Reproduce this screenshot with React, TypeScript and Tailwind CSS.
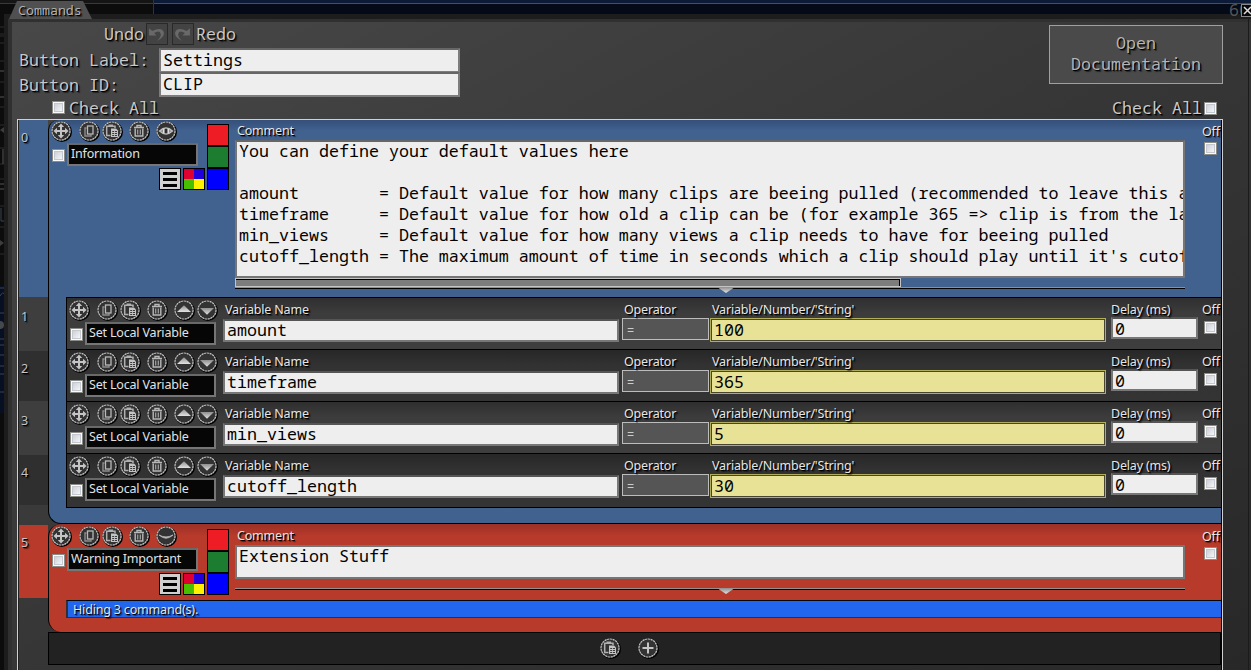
import React from "react";

const MONO_FACE = "font-['Noto_Sans_Mono','DejaVu_Sans_Mono',monospace] text-[16.67px] whitespace-pre";
const MONO = `${MONO_FACE} leading-[21px]`;
const SANS = "font-['Noto_Sans',sans-serif] text-[12.5px] tracking-[-0.18px] leading-[16px] whitespace-nowrap";
const SHADOW = "[text-shadow:1px_1px_0_#000,2px_2px_1px_#0008]";

type IconName = "move" | "copy" | "paste" | "trash" | "eye" | "closed" | "up" | "down" | "plus";

const glyphs: Record<IconName, React.ReactNode> = {
  move: (
    <>
      <path d="M10 4v12M4 10h12" stroke="#c4c4c4" strokeWidth="2" />
      <path d="M10 2.5l3.2 3.5H6.8zM10 17.5l3.2-3.5H6.8zM2.5 10L6 6.8v6.4zM17.5 10L14 6.8v6.4z" fill="#c4c4c4" />
    </>
  ),
  copy: (
    <>
      <path d="M7.5 7H6v8h6v-1.5" fill="none" stroke="#8d8d8d" strokeWidth="1.4" />
      <rect x="8.5" y="5" width="5.5" height="8" fill="#333" stroke="#b8b8b8" strokeWidth="1.3" />
    </>
  ),
  paste: (
    <>
      <path d="M8.5 14.5H4.7V5.2H13V7" fill="none" stroke="#b0b0b0" strokeWidth="1.5" />
      <path d="M6.5 3.5h4.6V6H6.5z" fill="#b0b0b0" />
      <path d="M9 7.5h5l2 2V16H9z" fill="#c4c4c4" />
      <path d="M10.2 10.5h2M13 10.5h2M10.2 12.5h2M13 12.5h2M10.2 14.5h2M13 14.5h2" stroke="#3a3a3a" />
    </>
  ),
  trash: (
    <>
      <path d="M5 6.5h10M8 6V4.5h4V6" fill="none" stroke="#b8b8b8" strokeWidth="1.4" />
      <path d="M6.2 7.5V15h7.6V7.5" fill="none" stroke="#b8b8b8" strokeWidth="1.4" />
      <path d="M8.7 8.5v5M11.3 8.5v5" stroke="#a5a5a5" strokeWidth="1.2" />
    </>
  ),
  eye: (
    <>
      <path d="M3.5 10Q10 4 16.5 10Q10 16 3.5 10z" fill="#8f8f8f" stroke="#c0c0c0" strokeWidth="1.2" />
      <path d="M10 7.8v4.4" stroke="#222" strokeWidth="1.8" />
      <path d="M7.5 7.8v4.4M12.5 7.8v4.4" stroke="#ddd" strokeWidth="1" />
    </>
  ),
  closed: <path d="M3 9Q10 15.5 17 9Q10 12.8 3 9z" fill="#bbb" stroke="#bbb" strokeWidth=".8" />,
  up: <path d="M3 12L10 5.2L17 12z" fill="url(#arrowFill)" />,
  down: <path d="M3 8L10 14.8L17 8z" fill="url(#arrowFill)" />,
  plus: <path d="M10 4.5v11M4.5 10h11" stroke="#c4c4c4" strokeWidth="2" />,
};

function Icon({ name, className = "" }: { name: IconName; className?: string }) {
  return (
    <svg viewBox="0 0 21 21" className={`size-[21px] shrink-0 ${className}`}>
      <defs>
        <linearGradient id="arrowFill" x1="0" y1="0" x2="0" y2="1">
          <stop offset="0" stopColor="#8e8e8e" />
          <stop offset="1" stopColor="#e2e2e2" />
        </linearGradient>
      </defs>
      <circle cx="10.9" cy="10.9" r="9.3" fill="none" stroke="#000" strokeWidth="1.6" />
      <circle cx="10" cy="10" r="9" fill="#333" stroke="#1b1b1b" strokeWidth="1.5" />
      <circle cx="10" cy="10" r="9" fill="none" stroke="#c8c8c8" strokeWidth="1.2" strokeDasharray="2.3 .5" />
      {glyphs[name]}
    </svg>
  );
}

function IconBar({ names }: { names: IconName[] }) {
  return (
    <div className="flex h-[21px]">
      {names.map((n, i) => (
        <Icon
          key={n}
          name={n}
          className={i === 0 ? "" : i === 1 ? "ml-[7px]" : i === 2 ? "ml-[2px]" : i === 5 ? "ml-[2px]" : "ml-[6px]"}
        />
      ))}
    </div>
  );
}

function Check({ className = "" }: { className?: string }) {
  return (
    <div className={`size-[13px] shrink-0 border border-[#8c8c86] bg-[#fafafa] p-px ${className}`}>
      <div className="size-full border border-[#c4c8d0] bg-linear-to-br from-[#cdd0d8] to-[#f6f6f6]" />
    </div>
  );
}

function Name({ children }: { children: string }) {
  return (
    <div className={`${SANS} h-[23px] w-[131px] border-2 border-[#767676] border-t-[#696969] bg-[#060606] pt-px pl-[2px] text-[#e2e2e2]`}>
      {children}
    </div>
  );
}

function Label({ children, className = "" }: { children: string; className?: string }) {
  return <div className={`${SANS} ${SHADOW} text-[#e6e6e6] ${className}`}>{children}</div>;
}

function VariableRow({ name, value, odd, last }: { name: string; value: string; odd: boolean; last?: boolean }) {
  return (
    <div
      className={`flex border-t border-black bg-linear-to-b ${last ? "h-[55px] border-b" : "h-[52px]"} ${
        odd ? "from-[#2f2f2f] from-0% via-[#3c3c3c] via-30% to-[#3e3e3e]" : "from-[#272727] from-0% via-[#323232] via-30% to-[#343434]"
      }`}
    >
      <div className="w-[156px] pt-[2px] pl-[2px]">
        <IconBar names={["move", "copy", "paste", "trash", "up", "down"]} />
        <div className="flex pt-px">
          <Check className="mt-[6px] ml-px mr-[2px]" />
          <Name>Set Local Variable</Name>
        </div>
      </div>
      <div className="w-[399px]">
        <Label className="mt-[4px] ml-[2px]">Variable Name</Label>
        <div className={`${MONO_FACE} mt-px h-[23px] w-[396px] border-2 border-[#777] border-t-[#555] bg-[#eee] pl-[2px] leading-[18px] text-black`}>
          {name}
        </div>
      </div>
      <div className="w-[88px]">
        <Label className="mt-[4px] ml-[2px]">Operator</Label>
        <div className={`${SANS} h-[22px] w-[87px] border border-[#bcbcbc] bg-[#555] pt-[4px] pl-[4px] text-[#ccc]`}>=</div>
      </div>
      <div className="w-[401px]">
        <Label className="mt-[4px] ml-[2px]">Variable/Number/'String'</Label>
        <div className="h-[24px] w-[396px] border border-[#b0ad5c]">
          <div className={`${MONO_FACE} h-[22px] border border-[#484530] bg-[#e8e297] pl-[2px] leading-[19px] text-black`}>{value}</div>
        </div>
      </div>
      <div className="w-[91px]">
        <Label className="mt-[4px]">Delay (ms)</Label>
        <div className={`${MONO_FACE} -mt-px h-[22px] w-[87px] border-2 border-[#777] border-t-[#555] bg-[#eee] pl-[2px] leading-[19px] text-black`}>
          0
        </div>
      </div>
      <div className="w-[19px] pt-[4px]">
        <Label>Off</Label>
        <Check className="mt-[3px] ml-[2px]" />
      </div>
    </div>
  );
}

function Swatches() {
  return (
    <div className="flex items-end">
      <div className="flex size-[22px] flex-col justify-center gap-[3px] border border-black bg-[#cfcfcf] px-[3px]">
        <i className="h-[3px] bg-black" />
        <i className="h-[3px] bg-black" />
        <i className="h-[3px] bg-black" />
      </div>
      <div className="ml-[2px] grid size-[22px] grid-cols-2 border border-black">
        <i className="bg-[#dd0030]" />
        <i className="bg-[#2000dd]" />
        <i className="bg-[#48c000]" />
        <i className="bg-[#fff200]" />
      </div>
      <div className="ml-[2px]">
        <div className="size-[22px] border border-black bg-[#ee1c25]" />
        <div className="size-[22px] border border-black bg-[#1c7c30]" />
        <div className="size-[22px] border border-black bg-[#0000ff]" />
      </div>
    </div>
  );
}

function Divider() {
  return (
    <div className="h-[6px] w-[950px]">
      <div className="h-px bg-[#909090]" />
      <div className="h-px bg-black" />
      <svg viewBox="0 0 18 6" className="-mt-[2px] ml-[482px] h-[6px] w-[18px]">
        <path d="M0 0h18L9 6z" fill="url(#arrowFill)" />
      </svg>
    </div>
  );
}

function CommentHead({ title, eye, children }: { title: string; eye: IconName; children: React.ReactNode }) {
  return (
    <div className="flex">
      <div className="w-[186px] pt-px pl-[2px]">
        <IconBar names={["move", "copy", "paste", "trash", eye]} />
        <div className="flex pt-px">
          <Check className="mt-[6px] ml-px mr-[2px]" />
          <Name>{title}</Name>
        </div>
        <div className="-mt-[42px] ml-[108px] flex h-[66px] items-end">
          <Swatches />
        </div>
      </div>
      <div className="w-[967px]">
        <Label className="mt-[3px] ml-[2px]">Comment</Label>
        {children}
      </div>
      <div className="w-[19px] pt-[4px]">
        <Label>Off</Label>
        <Check className="mt-[2px] ml-[2px]" />
      </div>
    </div>
  );
}

const gutter = [
  { n: "0", cls: "h-[177px] bg-[#41618f] pt-[10px]" },
  { n: "1", cls: "h-[54px] bg-[#3e3e3e] pt-[12px]" },
  { n: "2", cls: "h-[50px] bg-[#2f2f2f] pt-[10px]" },
  { n: "3", cls: "h-[54px] bg-[#3e3e3e] pt-[12px]" },
  { n: "4", cls: "h-[50px] bg-[#2f2f2f] pt-[10px]" },
  { n: "", cls: "h-[20px] bg-[#3a3a3a]" },
  { n: "5", cls: "h-[73px] bg-[#b83a2a] pt-[10px]" },
];

const help = `You can define your default values here

amount        = Default value for how many clips are beeing pulled (recommended to leave this a
timeframe     = Default value for how old a clip can be (for example 365 => clip is from the la
min_views     = Default value for how many views a clip needs to have for beeing pulled
cutoff_length = The maximum amount of time in seconds which a clip should play until it's cutof`;

function HistoryButton({ flip }: { flip?: boolean }) {
  return (
    <div className="flex size-[22px] items-center justify-center border border-[#292929] bg-[#434343]">
      <svg viewBox="0 0 16 16" className={`size-[17px] ${flip ? "-scale-x-100" : ""}`}>
        <path d="M1 2v7h7L5.7 6.7Q11 3.5 12 7.5Q12.4 10.5 8.5 14Q15.5 10.5 15 6.2Q13 .5 4 4.7z" fill="#696969" />
      </svg>
    </div>
  );
}

function HeaderField({ label, value, labelClass }: { label: string; value: string; labelClass: string }) {
  return (
    <div className={`${MONO_FACE} flex h-[24px] pl-[2px]`}>
      <span className={`${SHADOW} w-[140px] leading-[21px] text-[#c8c8c8] ${labelClass}`}>{label}</span>
      <div className="h-[25px] w-[301px] border-2 border-[#7d7d7d] border-t-[#666] bg-[#eee] pl-[2px] leading-[19px] text-black">
        {value}
      </div>
    </div>
  );
}

export default function App() {
  return (
    <div className="relative h-[670px] w-[1251px] overflow-hidden bg-[#0c0c0c]">
      {/* Windows behind the command panel */}
      <div className="flex h-[14px]">
        <div className="w-[154px] border-r border-[#333] bg-linear-to-b from-[#151515] from-20% to-[#0c0c0c] to-30%">
          <div className="h-[4px] border-b border-[#393939]" />
        </div>
        <div className="flex-1 bg-[#040a18]">
          <div className="h-[4px] border-b border-[#4b4e55] bg-[#0c1b38]" />
        </div>
      </div>
      <div className="flex h-[656px]">
        <svg viewBox="0 0 4 656" className="h-[656px] w-1 shrink-0">
          <rect y="272" width="4" height="127" fill="#061022" />
          <path d="M0 13h4M0 20h4M0 22h4M0 29h4M0 47h4M0 68h4M0 93h4M0 111h4M0 134h4M0 150h4M0 165h4M0 192h4M0 213h4M0 240h4" stroke="#2c2c2c" />
          <path d="M0 57h4M0 83h4M0 170h4M0 175h4M3 135v15" stroke="#3c3c3c" strokeWidth="1.5" />
          <path d="M0 116l4-3v6zM4 229l-4-3v6z" fill="#3c3c3c" />
          <path d="M1 194v13h3M0 274h4M0 282q3-5 4-2M0 299h4M0 325h4M0 331h4M0 341h4M0 352h4M0 360h4M0 378h4" stroke="#3b4250" fill="none" />
          <circle cy="311" r="4" fill="#45484e" />
        </svg>
        <div className="flex-1 bg-[#1d1d1d] pt-[5px] pl-[4px]">
          <div className="h-full border-t-[3px] border-l-4 border-[#303030]">
            <div className="h-full bg-linear-to-br from-[#484848] via-[#363636] via-50% to-[#282828] pl-[5px]">
              <div className="flex h-[97px]">
                <div className="w-[1032px]">
                  <div className={`${MONO} ${SHADOW} flex h-[26px] pt-px pl-[87px] text-[#c8c8c8]`}>
                    Undo
                    <div className="ml-[2px] flex gap-[4px]">
                      <HistoryButton />
                      <HistoryButton flip />
                    </div>
                    <span className="ml-[2px]">Redo</span>
                  </div>
                  <HeaderField label="Button Label:" value="Settings" labelClass="pt-px" />
                  <HeaderField label="Button ID:" value="CLIP" labelClass="pt-[2px]" />
                  <div className={`${MONO} ${SHADOW} flex h-[23px] items-center pl-[35px] text-[#c8c8c8]`}>
                    <Check className="mr-[4px]" />
                    <span className="-mt-px">Check All</span>
                  </div>
                </div>
                <div className="w-[176px]">
                  <div className={`${MONO} ${SHADOW} mt-[3px] flex h-[59px] w-[174px] flex-col justify-center border border-[#a0a0a0] bg-[#4a4a4a] pb-[4px] text-center text-[#b4b4b4]`}>
                    <span>Open</span>
                    <span>Documentation</span>
                  </div>
                  <div className={`${MONO} ${SHADOW} mt-[13px] flex h-[22px] w-[168px] items-center justify-end text-[#c8c8c8]`}>
                    <span className="-mt-px">Check All</span>
                    <Check className="ml-[2px]" />
                  </div>
                </div>
              </div>

              {/* Command list */}
              <div className="flex h-[551px] w-[1206px] border-x border-t border-[#d0d0d0]">
                <div className="w-[30px] border-l border-[#222]">
                  {gutter.map((g, i) => (
                    <div key={i} className={`${SANS} ${SHADOW} pl-[2px] text-[#c4c4c4] ${g.cls}`}>
                      {g.n}
                    </div>
                  ))}
                </div>
                <div className="w-[1173px]">
                  <div className="h-[404px] overflow-hidden rounded-tl-[10px] rounded-bl-[13px] border-b border-l border-black bg-[#41618f] bg-linear-to-b from-[#34507a] to-[#41618f] to-[11px]">
                    <CommentHead title="Information" eye="eye">
                      <div className={`${MONO} mt-px h-[138px] w-[950px] overflow-hidden border-2 border-[#767676] border-t-[#666] bg-[#eee] pl-[2px] text-black`}>
                        <div className="-mt-[2px]">{help}</div>
                      </div>
                      <div className="h-[9px] w-[666px] border border-[#c4c4c4] bg-black pt-px">
                        <div className="h-[6px] w-[663px] bg-[#7d7d7d]" />
                      </div>
                      <Divider />
                    </CommentHead>
                    <div className="mt-[4px] ml-[17px] border-l border-black">
                      {[
                        ["amount", "100"],
                        ["timeframe", "365"],
                        ["min_views", "5"],
                        ["cutoff_length", "30"],
                      ].map(([name, value], i) => (
                        <VariableRow key={name} name={name} value={value} odd={i % 2 === 0} last={i === 3} />
                      ))}
                    </div>
                  </div>
                  <div className="h-[108px] overflow-hidden rounded-l-[13px] border-l border-black bg-[#b83a2a] bg-linear-to-b from-[#9b3026] to-[#b83a2a] to-[12px] pt-px">
                    <CommentHead title="Warning Important" eye="closed">
                      <div className={`${MONO_FACE} mt-px h-[34px] w-[950px] border-2 border-[#767676] bg-[#eee] pl-[2px] leading-[17px] text-black`}>
                        Extension Stuff
                      </div>
                      <div className="pt-[9px]">
                        <Divider />
                      </div>
                    </CommentHead>
                    <div className={`${SANS} ${SHADOW} mt-[5px] ml-[17px] h-[18px] border-y border-l-2 border-[#303030] border-t-black bg-[#2266ee] pt-px pl-[5px] text-[#e6e6e6]`}>
                      Hiding 3 command(s).
                    </div>
                  </div>
                  <div className="flex h-[33px] justify-center gap-[17px] border border-black bg-[#222] pt-[5px] pr-[11px]">
                    <Icon name="paste" />
                    <Icon name="plus" />
                  </div>
                </div>
                <div className="w-px bg-black" />
              </div>
            </div>
          </div>
        </div>
      </div>

      {/* Window tab and close button overlap the frame */}
      <svg viewBox="0 0 84 18" className="absolute top-px left-[9px] h-[18px] w-[84px]">
        <path d="M0 18L8 0H74L83 18z" fill="#505050" />
      </svg>
      <div className={`absolute top-[3px] left-[18px] font-['Noto_Sans_Mono','DejaVu_Sans_Mono',monospace] text-[13.3px] leading-[15px] text-[#b0b0b0] ${SHADOW}`}>
        Commands
      </div>
      <div className={`absolute -top-px left-[1229px] w-[20px] text-[#555] ${MONO}`}>60</div>
      <svg viewBox="0 0 12 13" className="absolute top-[4px] left-[1241px] h-[13px] w-[12px]">
        <rect x=".5" y=".5" width="14" height="12" fill="#080808" stroke="#888" />
        <path d="M3 3l7 7M10 3l-7 7" stroke="#ddd" strokeWidth="1.5" />
      </svg>
      <div className="absolute top-[19px] right-[2px] h-[651px] w-px bg-[#1b1b1b]" />
    </div>
  );
}
